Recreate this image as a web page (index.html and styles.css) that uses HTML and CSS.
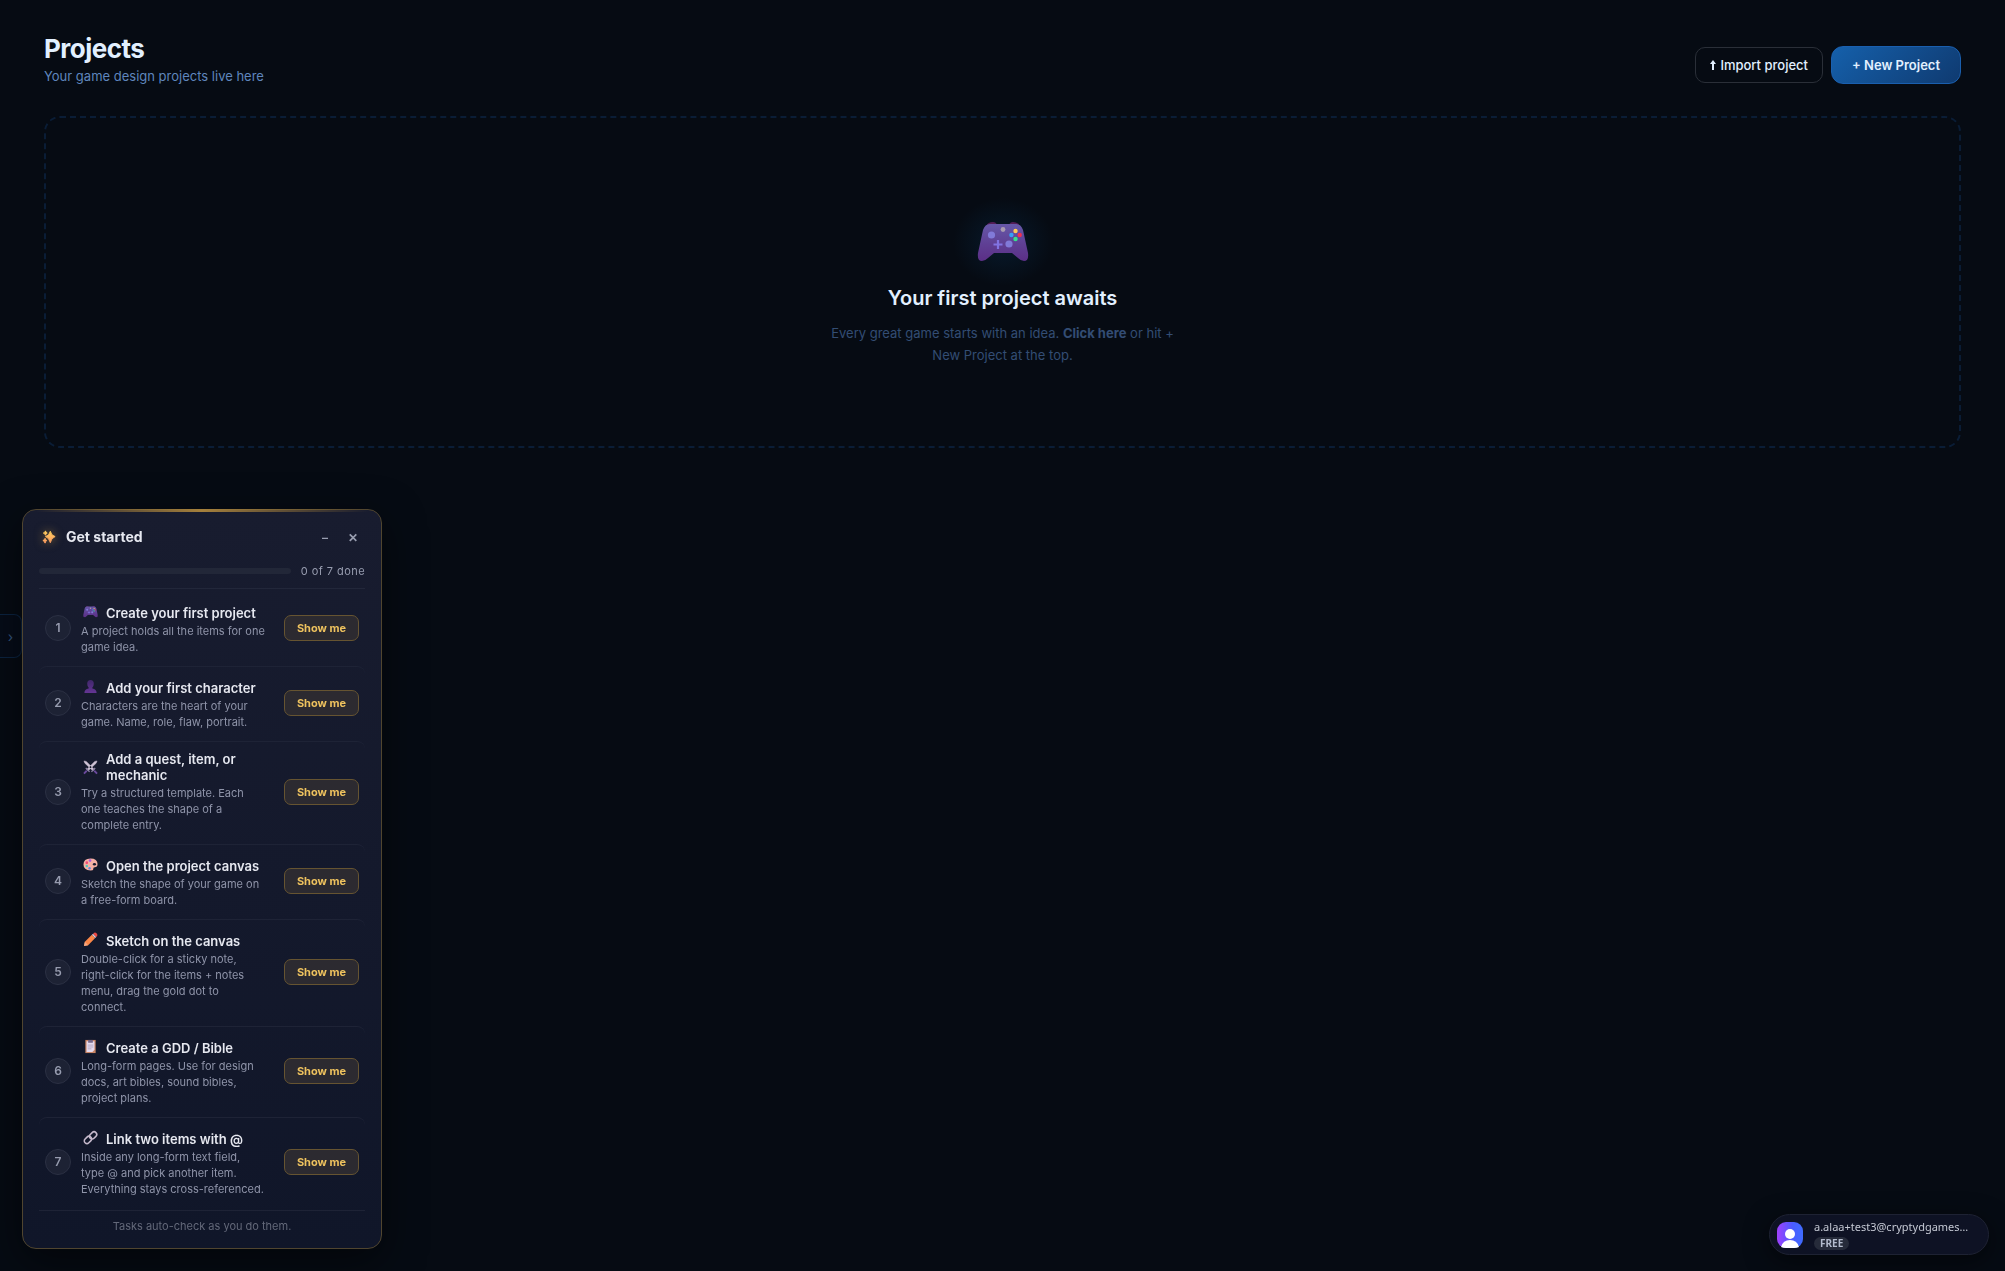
FILE: index.html
```html
<!DOCTYPE html>
<html lang="en">
<head>
<meta charset="utf-8">
<meta name="viewport" content="width=device-width, initial-scale=1">
<title>Projects</title>
<link rel="stylesheet" href="styles.css">
</head>
<body>
<svg class="defs" aria-hidden="true">
  <defs>
    <linearGradient id="pad-body" x1="0" y1="0" x2="0" y2="1">
      <stop offset="0" stop-color="#6658a8"/><stop offset=".55" stop-color="#5f3f94"/><stop offset="1" stop-color="#5b2f86"/>
    </linearGradient>
    <linearGradient id="bust" x1="0" y1="0" x2="0" y2="1">
      <stop offset="0" stop-color="#40276b"/><stop offset="1" stop-color="#643594"/>
    </linearGradient>
    <linearGradient id="spark" x1="0" y1="0" x2="0" y2="1">
      <stop offset="0" stop-color="#ffd25e"/><stop offset="1" stop-color="#ff9a62"/>
    </linearGradient>
    <linearGradient id="avatar" x1="0" y1="0" x2="1" y2="0">
      <stop offset="0" stop-color="#a040ff"/><stop offset=".6" stop-color="#4a5cff"/><stop offset="1" stop-color="#3f6cff"/>
    </linearGradient>
    <symbol id="gamepad" viewBox="0 0 52 40">
      <path d="M9 4Q11 0 16 0Q19 0 20 3L32 3Q33 0 36 0Q41 0 43 4Z" fill="#541d57"/>
      <path d="M13 2H39Q44 2 46 8L51 31Q52 39 47 39Q44 39 41 36L35 31H17L11 36Q8 39 5 39Q0 39 1 31L6 8Q8 2 13 2Z" fill="url(#pad-body)"/>
      <circle cx="14.500" cy="13" r="3.600" fill="#817ad8"/><circle cx="32" cy="22" r="3.600" fill="#817ad8"/>
      <path d="M21 18v9M16.500 22.500h9" stroke="#8173e2" stroke-width="2.200"/>
      <circle cx="26" cy="7.500" r="2.400" fill="#a99bb0"/>
      <circle cx="38.500" cy="9" r="2.200" fill="#ffc857"/><circle cx="42.700" cy="13" r="2.200" fill="#f4304f"/>
      <circle cx="34.400" cy="13" r="2.200" fill="#37a0f5"/><circle cx="38.500" cy="17" r="2.200" fill="#36e38c"/>
    </symbol>
  </defs>
</svg>

<main class="page">
  <header class="page-header">
    <div>
      <h1 class="page-title">Projects</h1>
      <p class="page-subtitle">Your game design projects live here</p>
    </div>
    <div class="page-actions">
      <button class="btn btn-import" type="button"><svg class="btn-arrow" viewBox="0 0 6 10" aria-hidden="true"><path d="M3 0L6 4H4V10H2V4H0Z" fill="currentColor"/></svg>Import project</button>
      <button class="btn btn-new" type="button">+ New Project</button>
    </div>
  </header>

  <section class="empty">
    <svg class="empty-icon" aria-hidden="true"><use href="#gamepad"/></svg>
    <h2 class="empty-title">Your first project awaits</h2>
    <p class="empty-text">Every great game starts with an idea. <strong>Click here</strong> or hit + New Project at the top.</p>
  </section>
</main>

<button class="side-tab" type="button" aria-label="Open sidebar">›</button>

<aside class="guide" aria-label="Get started">
  <header class="guide-header">
    <svg class="guide-spark" viewBox="0 0 16 16" aria-hidden="true">
      <path d="M9.500 1.500Q10.500 6.500 15 7.500Q10.500 9 9.500 14.500Q8.300 9 4 7.500Q8.300 6.500 9.500 1.500Z M4 1Q4.300 3 6 3.500Q4.300 4 4 6Q3.500 4 1.500 3.500Q3.500 3 4 1Z M3.500 9.500Q4 11.500 5.500 12Q4 12.500 3.500 15Q3 12.500 1 12Q3 11.500 3.500 9.500Z" fill="url(#spark)" stroke="url(#spark)" stroke-width="1.100"/>
    </svg>
    <h2 class="guide-title">Get started</h2>
    <button class="guide-control" type="button" aria-label="Minimize">–</button>
    <button class="guide-control" type="button" aria-label="Close">✕</button>
  </header>
  <div class="guide-progress">
    <div class="guide-track" role="progressbar" aria-label="Tasks done" aria-valuenow="0" aria-valuemin="0" aria-valuemax="7"></div>
    <span class="guide-count">0 of 7 done</span>
  </div>
  <ol class="tasks">
    <li class="task">
      <span class="task-number">1</span>
      <div class="task-body">
        <h3 class="task-title"><svg class="task-icon" viewBox="0 -7 52 52" aria-hidden="true"><use href="#gamepad" width="52" height="40"/></svg>Create your first project</h3>
        <p class="task-text">A project holds all the items for one game idea.</p>
      </div>
      <button class="btn-show" type="button">Show me</button>
    </li>
    <li class="task">
      <span class="task-number">2</span>
      <div class="task-body">
        <h3 class="task-title"><svg class="task-icon" viewBox="0 0 16 16" aria-hidden="true"><path d="M8 1Q11.500 1 11.500 5Q11.500 7.500 10 9V10Q14.500 10.500 14.500 15H1.500Q1.500 10.500 6 10V9Q4.500 7.500 4.500 5Q4.500 1 8 1Z" fill="url(#bust)"/></svg>Add your first character</h3>
        <p class="task-text">Characters are the heart of your game. Name, role, flaw, portrait.</p>
      </div>
      <button class="btn-show" type="button">Show me</button>
    </li>
    <li class="task">
      <span class="task-number">3</span>
      <div class="task-body">
        <h3 class="task-title"><svg class="task-icon" viewBox="0 0 16 16" aria-hidden="true"><path d="M1 1L3.500 1.500L12 10L10.500 11.500L2 3.500ZM15 1L12.500 1.500L4 10L5.500 11.500L14 3.500Z" fill="#cfc4d6" stroke="#cfc4d6" stroke-width=".5"/><path d="M9 12.500L13 8.500M7 12.500L3 8.500" stroke="#8d80a5" stroke-width="1.400"/><path d="M12 11.500L15 14.500M4 11.500L1 14.500" stroke="#6b4a9e" stroke-width="2"/></svg>Add a quest, item, or mechanic</h3>
        <p class="task-text">Try a structured template. Each<br>one teaches the shape of a<br>complete entry.</p>
      </div>
      <button class="btn-show" type="button">Show me</button>
    </li>
    <li class="task">
      <span class="task-number">4</span>
      <div class="task-body">
        <h3 class="task-title"><svg class="task-icon" viewBox="0 0 16 16" aria-hidden="true"><path d="M8 1.500Q15.500 1.500 15.500 7.500Q15.500 11 12.500 11Q10.500 11 11 13Q11 14.500 8 14.500Q.5 14 .5 8Q.5 1.500 8 1.500Z" fill="#f6b0a4"/><ellipse cx="12.200" cy="7.800" rx="1.700" ry="1.300" fill="#1a1c30"/><circle cx="7.500" cy="3.800" r="1.400" fill="#a95ce0"/><circle cx="4" cy="6" r="1.400" fill="#ef4a78"/><circle cx="4" cy="9.500" r="1.300" fill="#4cc7bd"/><circle cx="7" cy="12" r="1.300" fill="#5b8de8"/></svg>Open the project canvas</h3>
        <p class="task-text">Sketch the shape of your game on<br>a free-form board.</p>
      </div>
      <button class="btn-show" type="button">Show me</button>
    </li>
    <li class="task">
      <span class="task-number">5</span>
      <div class="task-body">
        <h3 class="task-title"><svg class="task-icon" viewBox="0 0 16 16" aria-hidden="true"><path d="M1 15L2 10.500L9.500 3L13 6.500L5.500 14Z" fill="#fb8748"/><path d="M9.500 3L10.800 1.900L14.100 5.200L13 6.500Z" fill="#d9cddd"/><path d="M10.800 1.900L12 .8Q13 .3 14.700 1.500Q15.700 3 15.200 4L14.100 5.200Z" fill="#ee4a45"/><path d="M1 15L2 10.500L5.500 14Z" fill="#f3a783"/></svg>Sketch on the canvas</h3>
        <p class="task-text">Double-click for a sticky note,<br>right-click for the items + notes<br>menu, drag the gold dot to<br>connect.</p>
      </div>
      <button class="btn-show" type="button">Show me</button>
    </li>
    <li class="task">
      <span class="task-number">6</span>
      <div class="task-body">
        <h3 class="task-title"><svg class="task-icon" viewBox="0 0 16 16" aria-hidden="true"><path d="M2.500 1H13.500V15H2.500Z" fill="#c98565"/><path d="M3.800 2.500H12.200V11.500L10 13.800H3.800Z" fill="#e4daee"/><path d="M5.500 1H10.500V4H5.500Z" fill="#77698b"/><path d="M5 6.500H11M5 8.500H11M5 10.500H9" stroke="#a79bb8" stroke-width=".8"/></svg>Create a GDD / Bible</h3>
        <p class="task-text">Long-form pages. Use for design docs, art bibles, sound bibles, project plans.</p>
      </div>
      <button class="btn-show" type="button">Show me</button>
    </li>
    <li class="task">
      <span class="task-number">7</span>
      <div class="task-body">
        <h3 class="task-title"><svg class="task-icon" viewBox="0 0 16 16" aria-hidden="true"><g fill="none" stroke="#c5b9cb" stroke-width="1.700"><rect x="6.500" y="3" width="8.500" height="5.600" rx="2.800" transform="rotate(-45 10.750 5.800)"/><rect x="1" y="7.800" width="8.500" height="5.600" rx="2.800" transform="rotate(-45 5.250 10.600)"/></g></svg>Link two items with @</h3>
        <p class="task-text">Inside any long-form text field,<br>type @ and pick another item.<br>Everything stays cross-referenced.</p>
      </div>
      <button class="btn-show" type="button">Show me</button>
    </li>
  </ol>
  <footer class="guide-footer">Tasks auto-check as you do them.</footer>
</aside>

<button class="account" type="button">
  <svg class="account-avatar" viewBox="0 0 26 26" aria-hidden="true">
    <rect width="26" height="26" rx="9" fill="url(#avatar)"/>
    <circle cx="13" cy="12" r="5" fill="#fff"/>
    <path d="M4 25Q6 18 13 18Q20 18 22 25Q20 26 17 26H9Q6 26 4 25Z" fill="#fff"/>
  </svg>
  <span class="account-info">
    <span class="account-email">a.alaa+test3@cryptydgames…</span>
    <span class="account-plan">FREE</span>
  </span>
</button>
</body>
</html>
```
FILE: styles.css
```css
*, *::before, *::after { box-sizing: border-box; }

body {
  margin: 0;
  min-height: 100vh;
  background: #060b13;
  color: #e2f0ff;
  font-family: Inter, "Liberation Sans", sans-serif;
  font-size: 13px;
}

h1, h2, h3, p, ol { margin: 0; padding: 0; }
button { font-family: inherit; cursor: pointer; }
.defs { position: absolute; width: 0; height: 0; }

.page { padding: 32px 44px; }

.page-header {
  display: flex;
  justify-content: space-between;
  align-items: flex-end;
  margin-bottom: 32px;
}
.page-title { font-size: 26px; line-height: 34px; font-weight: 700; letter-spacing: -0.02em; }
.page-subtitle { margin-top: 2px; font-size: 13px; line-height: 16px; color: #5f86bd; }

.page-actions { display: flex; align-items: center; gap: 8px; }
.btn { font-size: 13px; line-height: 16px; font-weight: 600; color: #e2f0ff; }
.btn-import {
  display: flex;
  align-items: center;
  gap: 4px;
  padding: 9px 14px;
  border: 1px solid #2a2f38;
  border-radius: 10px;
  background: transparent;
  font-weight: 500;
}
.btn-arrow { width: 6px; height: 10px; }
.btn-new {
  padding: 10px 20px;
  border: 1px solid #1a5fae;
  border-radius: 12px;
  background: linear-gradient(135deg, #1560ab, #0f3a70);
}

.empty {
  display: flex;
  flex-direction: column;
  align-items: center;
  padding: 80px 20px;
  border: 2px dashed #0a1d36;
  border-radius: 16px;
  text-align: center;
}
.empty-icon {
  width: 100px;
  height: 88px;
  padding: 24px;
  background: radial-gradient(closest-side, #071a2c, #060b13);
}
.empty-title { font-size: 20px; line-height: 24px; font-weight: 600; }
.empty-text { max-width: 360px; margin-top: 12px; font-size: 13px; line-height: 22px; color: #334d73; }

.side-tab {
  position: fixed;
  left: 0;
  bottom: 613px;
  width: 22px;
  height: 44px;
  padding: 0;
  border: 1px solid #0b2340;
  border-left: 0;
  border-radius: 0 8px 8px 0;
  background: #060c18;
  color: #34557f;
  font-size: 14px;
}

.guide {
  position: fixed;
  left: 22px;
  bottom: 22px;
  width: 360px;
  padding: 15px 16px;
  border: 1px solid #50452f;
  border-radius: 14px;
  background: linear-gradient(#181c2f, #101629);
  box-shadow: 0 12px 40px rgba(0, 0, 0, .5);
  color: #e6e8f0;
}
.guide::before {
  content: "";
  position: absolute;
  top: -1px;
  left: 12px;
  right: 12px;
  height: 3px;
  background: linear-gradient(90deg, transparent, #a5803c, transparent);
}
.guide-header { display: flex; align-items: center; height: 24px; }
.guide-spark { width: 14px; height: 14px; margin: 0 10px 0 3px; filter: drop-shadow(0 0 5px rgba(240, 180, 60, .5)); }
.guide-title { flex: 1; font-size: 14px; line-height: 20px; font-weight: 700; }
.guide-control {
  width: 24px;
  height: 24px;
  margin-left: 4px;
  padding: 0;
  border: 0;
  background: transparent;
  color: #999eb0;
  font-size: 12px;
  font-weight: 600;
}
.guide-progress {
  display: flex;
  align-items: center;
  gap: 10px;
  margin-top: 14px;
  padding-bottom: 9px;
  border-bottom: 1px solid #22273a;
}
.guide-track { flex: 1; height: 6px; border-radius: 3px; background: #222738; }
.guide-count { font-size: 11px; line-height: 16px; letter-spacing: 0.04em; color: #979caf; }

.tasks { padding: 3px 0 2px; list-style: none; }
.task {
  display: flex;
  align-items: center;
  gap: 10px;
  padding: 9px 6px 11px;
  border-radius: 8px;
}
.task + .task { border-top: 1px solid #1e2336; }
.task-number {
  flex: none;
  width: 26px;
  height: 26px;
  border: 1px solid #2b3043;
  border-radius: 50%;
  background: #1d2234;
  color: #979caf;
  font-size: 12px;
  line-height: 24px;
  font-weight: 600;
  text-align: center;
}
.task-body { flex: 1; min-width: 0; }
.task-title {
  display: flex;
  align-items: flex-end;
  gap: 8px;
  min-height: 20px;
  font-size: 13px;
  line-height: 16px;
  font-weight: 600;
}
.task-icon { flex: none; align-self: center; width: 15px; height: 15px; margin-left: 2px; }
.task-text { margin-top: 2px; font-size: 11px; line-height: 16px; color: #8f94a9; }
.btn-show {
  flex: none;
  width: 75px;
  height: 26px;
  padding: 0;
  border: 1px solid #665431;
  border-radius: 7px;
  background: #2c2a30;
  color: #eec25e;
  font-size: 11px;
  font-weight: 700;
}
.guide-footer {
  padding-top: 8px;
  border-top: 1px solid #1e2336;
  font-size: 11px;
  line-height: 14px;
  color: #636879;
  text-align: center;
}

.account {
  position: fixed;
  right: 16px;
  bottom: 16px;
  display: flex;
  align-items: center;
  gap: 11px;
  min-width: 220px;
  padding: 4px 14px 4px 7px;
  border: 1px solid #1e2233;
  border-radius: 21px;
  background: #0e1224;
  box-shadow: 0 6px 24px rgba(0, 0, 0, .5);
  color: #c4c8d3;
  font-family: "Noto Sans", "Open Sans", sans-serif;
  text-align: left;
}
.account-avatar { flex: none; width: 26px; height: 26px; }
.account-info { display: flex; flex-direction: column; align-items: flex-start; gap: 2px; }
.account-email { white-space: nowrap; font-size: 11px; line-height: 16px; }
.account-plan {
  padding: 0 6px;
  border-radius: 7px;
  background: #262b3a;
  color: #b3bbcd;
  font-size: 10px;
  line-height: 13px;
  font-weight: 700;
}
```
